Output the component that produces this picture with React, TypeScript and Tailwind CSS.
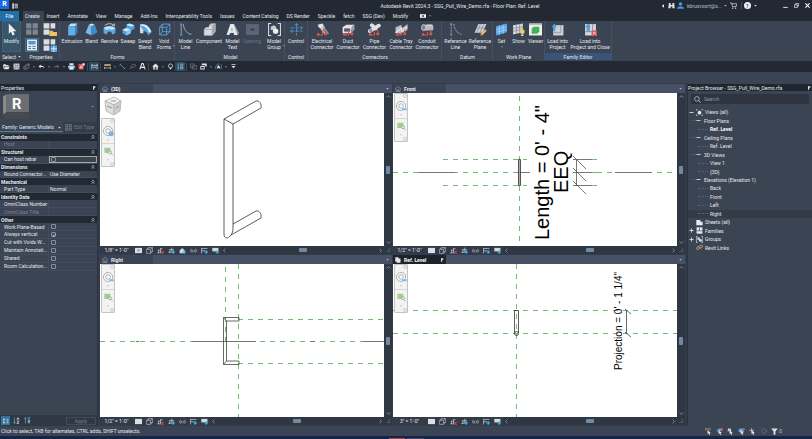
import type { ReactNode } from "react";
import clsx from "clsx";

type IconProps = { className?: string; children: ReactNode };

const Svg = ({ className = "size-[8px]", children }: IconProps) => (
  <svg viewBox="0 0 24 24" fill="none" className={clsx("block shrink-0", className)} aria-hidden="true">
    {children}
  </svg>
);

const Caret = ({ className = "size-[3px]" }: { className?: string }) => (
  <Svg className={className}>
    <path d="M2 7h20L12 19z" fill="currentColor" />
  </Svg>
);

const redNodes = (
  <>
    <path d="M4 22h8v-6M18 12v10" stroke="#d9534f" strokeWidth="2" />
    <circle cx="4" cy="21" r="2.5" fill="#d9534f" />
    <circle cx="18" cy="20" r="3" fill="#d9534f" />
  </>
);

const ribbonIcons: Record<string, ReactNode> = {
  Extrusion: (
    <>
      <path d="M4 6l5-5h12l-4 5z" fill="#bfe0fa" />
      <path d="M4 6h13v17H4z" fill="#62aeea" />
      <path d="M17 6l4-5v17l-4 5z" fill="#3c85c4" />
    </>
  ),
  Blend: (
    <>
      <path d="M7 3l5-2 6 2-6 3z" fill="#c5e3fb" />
      <path d="M7 3l5 3v17L1 18z" fill="#74b9f0" />
      <path d="M12 6l6-3 5 14-11 6z" fill="#3f8bcb" />
    </>
  ),
  Revolve: (
    <>
      <path d="M3 5c5-5 13-5 18 0M21 5V1M21 5h-4" stroke="#d5dbe2" strokeWidth="1.6" />
      <path d="M1 9c6-4 16-4 22 0v9c-2 2-4 3-6 3l-2-5h-6l-2 5c-2 0-4-1-6-3z" fill="#5ba8e6" />
      <path d="M1 9c6-4 16-4 22 0l-6 4c-3-2-7-2-10 0z" fill="#c0e0fa" />
    </>
  ),
  Sweep: (
    <>
      <path d="M8 3l6-2 9 3v7l-5 2-2 6-8 4-7-4v-7l7-3z" fill="#4f9fde" />
      <path d="M8 3l6-2 9 3-6 3zM1 12l7-3 8 3-8 4z" fill="#c9e5fc" />
      <path d="M8 16l8-4v7l-8 4z" fill="#88c5f5" />
    </>
  ),
  "Swept Blend": (
    <>
      <path d="M2 3c10-3 18 4 21 14l-6 6C15 16 10 13 2 16z" fill="#57a5e4" />
      <path d="M2 3c10-3 18 4 21 14h-5C15 8 9 5 2 5z" fill="#d2e9fc" />
      <path d="M2 5v14h6v-5z" fill="#d9dde2" />
    </>
  ),
  "Void Forms": (
    <path d="M3 8h13v14H3zM8 2h14v14H8zM3 8l5-6M16 8l6-6M16 22l6-6M3 22l5-6" stroke="#5ba3dc" strokeWidth="1.6" />
  ),
  "Model Line": (
    <>
      <path d="M4 2v20M8 2c1 10 5 16 14 19" stroke="#aeb6c1" strokeWidth="1.5" />
      <path d="M2 2h4M2 22h4M20 22l3-2" stroke="#5ba3dc" strokeWidth="2" />
    </>
  ),
  Component: (
    <>
      <path d="M2 11l4-3h5V4l4-3h8v15l-6 7H2z" fill="#d8dade" />
      <path d="M11 4h8v8H2v11h15V12l2-8 4-3" stroke="#949aa3" strokeWidth="1.3" />
      <path d="M19 4l4-3v15l-6 7V12z" fill="#a4a9b1" />
    </>
  ),
  "Model Text": (
    <>
      <path d="M9 2h6l9 17-4 4-4-5-9 1z" fill="#9da3ab" />
      <path d="M8 2h6l7 20h-6l-1-4H8l-2 4H1zm3 6l-2 6h4z" fill="#e6e7e9" fillRule="evenodd" />
    </>
  ),
  Opening: (
    <path d="M1 3h22v18H1zm6 6v6h10V9z" fill="#5d6572" fillRule="evenodd" stroke="#707885" />
  ),
  "Model Group": (
    <>
      <path d="M6 1H1v22h5M18 1h5v22h-5" stroke="#d5d9df" strokeWidth="2" />
      <path d="M5 7l6-3 4 3v6H5z" fill="#c6cad0" />
      <circle cx="14" cy="15" r="5" fill="#eceef0" />
    </>
  ),
  Control: (
    <>
      <path d="M12 1v22M1 9h22M1 15h22" stroke="#4c9ad6" strokeWidth="1.6" strokeDasharray="7 2" />
      <path d="M9 4l3-3 3 3M20 6l3 3-3 3M4 12l-3 3 3 3" stroke="#4c9ad6" strokeWidth="1.6" />
    </>
  ),
  "Electrical Connector": (
    <>
      <path d="M3 3l9-2 5 8-5 4-7-5z" fill="#e1e3e6" />
      <path d="M12 7l8 9M9 10l9 11" stroke="#e4a497" strokeWidth="3" />
      <path d="M13 7l10 13" stroke="#5ba8e6" strokeWidth="2.5" />
      {redNodes}
    </>
  ),
  "Duct Connector": (
    <>
      <path d="M1 8l7-5h15l-5 5v11H1z" fill="#e1e3e6" />
      <path d="M4 10h11v6H4z" fill="#525b69" />
      <path d="M18 8l5-5v9l-5 6z" fill="#9ba1aa" />
      {redNodes}
    </>
  ),
  "Pipe Connector": (
    <>
      <path d="M3 15L20 5M7 4l7 6" stroke="#dfe1e4" strokeWidth="7" strokeLinecap="round" />
      <ellipse cx="5" cy="14" rx="3" ry="4" fill="#88909b" />
      {redNodes}
    </>
  ),
  "Cable Tray Connector": (
    <>
      <path d="M1 18V8l11-5v7L23 2v11L11 20z" fill="#b9bec5" />
      <path d="M1 18l11-9v7l11-9" stroke="#e8e9eb" strokeWidth="2" />
      {redNodes}
    </>
  ),
  "Conduit Connector": (
    <>
      <path d="M4 3h16c4 0 4 11 0 11H4z" fill="#b5b9c0" />
      <ellipse cx="5" cy="8.5" rx="4" ry="5.5" fill="#7b828d" stroke="#e0e2e5" strokeWidth="1.5" />
      <path d="M10 4h11" stroke="#e7e8ea" strokeWidth="2" />
      {redNodes}
    </>
  ),
  "Reference Line": (
    <>
      <path d="M4 1v22M9 2c1 10 5 16 14 19" stroke="#aeb6c1" strokeWidth="1.5" strokeDasharray="4 1.5" />
      <path d="M2 2h4M2 22h4" stroke="#6fb073" strokeWidth="2" />
    </>
  ),
  "Reference Plane": (
    <>
      <path d="M8 2h15l-7 16H1z" fill="#c9ccd1" />
      <path d="M12 2L5 18M18 2l-7 16M5 9h15" stroke="#878e98" strokeWidth="1.3" />
      <path d="M22 13l-9 9" stroke="#edc25a" strokeWidth="4" />
      <path d="M14 19l-2 4 4-1z" fill="#e8705e" />
    </>
  ),
  Set: (
    <>
      <path d="M2 6l20-5v16L2 23z" fill="#53a5e8" />
      <path d="M8 5v17M15 3v17M2 12l20-5M2 17l20-5" stroke="#b9dcf8" strokeWidth="1.3" />
    </>
  ),
  Show: (
    <>
      <path d="M2 4l18-3v16L2 21z" fill="#d5d8dc" />
      <path d="M8 3v17M14 2v16M2 10l18-3M2 15l18-3" stroke="#848b96" strokeWidth="1.4" />
      <circle cx="19" cy="16" r="4.5" fill="#f8c95c" />
      <path d="M17 21h4v3h-4z" fill="#e6e6e6" />
    </>
  ),
  Viewer: (
    <>
      <path d="M0 1h24v22H0z" fill="#eef1ee" />
      <path d="M0 1h24v3H0z" fill="#b9c0c8" />
      <path d="M5 10l4-3h10v9l-4 4H5z" fill="#43b05c" />
    </>
  ),
  "Load into Project": (
    <>
      <path d="M4 4h19v19H4z" fill="#cfd1d4" />
      <path d="M18 4v14H4" stroke="#8b929b" strokeWidth="1.5" />
      <path d="M1 8l5-7 5 7H8v7H4V8z" fill="#4aa0e6" />
    </>
  ),
  "Load into Project and Close": (
    <>
      <path d="M2 2h20v21H2z" fill="#d6d8db" />
      <path d="M16 2v20M2 16h20M10 2v14" stroke="#7b838e" strokeWidth="1.5" />
      <path d="M2 8l5-7 5 7H9v7H5V8z" fill="#4aa0e6" />
      <path d="M14 14h10v10H14z" fill="#d95050" />
      <path d="M16.5 16.5l5 5m0-5l-5 5" stroke="#fff" strokeWidth="1.3" />
    </>
  ),
};

type Tool = { lines: string[]; width: string; disabled?: boolean; caret?: boolean };
type Panel = { title: string; className: string; tools: Tool[]; highlight?: boolean };

const panels: Panel[] = [
  {
    title: "Forms",
    className: "w-[115px] pl-[1px]",
    tools: [
      { lines: ["Extrusion"], width: "w-[22px]" },
      { lines: ["Blend"], width: "w-[17px]" },
      { lines: ["Revolve"], width: "w-[19px]" },
      { lines: ["Sweep"], width: "w-[18px]" },
      { lines: ["Swept", "Blend"], width: "w-[16px]" },
      { lines: ["Void", "Forms"], width: "w-[22px]", caret: true },
    ],
  },
  {
    title: "Model",
    className: "w-[110px] pl-[2px]",
    tools: [
      { lines: ["Model", "Line"], width: "w-[17px]" },
      { lines: ["Component"], width: "w-[30px]" },
      { lines: ["Model", "Text"], width: "w-[17px]" },
      { lines: ["Opening"], width: "w-[22px]", disabled: true },
      { lines: ["Model", "Group"], width: "w-[22px]", caret: true },
    ],
  },
  {
    title: "Control",
    className: "w-[23px]",
    tools: [{ lines: ["Control"], width: "w-[22px]" }],
  },
  {
    title: "Connectors",
    className: "w-[134px] pl-[1px]",
    tools: [
      { lines: ["Electrical", "Connector"], width: "w-[26px]" },
      { lines: ["Duct", "Connector"], width: "w-[26px]" },
      { lines: ["Pipe", "Connector"], width: "w-[27px]" },
      { lines: ["Cable Tray", "Connector"], width: "w-[26px]" },
      { lines: ["Conduit", "Connector"], width: "w-[26px]" },
    ],
  },
  {
    title: "Datum",
    className: "w-[51px] pl-[1px]",
    tools: [
      { lines: ["Reference", "Line"], width: "w-[25px]" },
      { lines: ["Reference", "Plane"], width: "w-[24px]" },
    ],
  },
  {
    title: "Work Plane",
    className: "w-[52px]",
    tools: [
      { lines: ["Set"], width: "w-[17px]", caret: true },
      { lines: ["Show"], width: "w-[17px]" },
      { lines: ["Viewer"], width: "w-[17px]" },
    ],
  },
  {
    title: "Family Editor",
    className: "w-[67px]",
    highlight: true,
    tools: [
      { lines: ["Load into", "Project"], width: "w-[25px]" },
      { lines: ["Load into", "Project and Close"], width: "w-[40px]" },
    ],
  },
];

const ribbonTabs = [
  "Create",
  "Insert",
  "Annotate",
  "View",
  "Manage",
  "Add-Ins",
  "Interoperability Tools",
  "Issues",
  "Content Catalog",
  "DS Render",
  "Speckle",
  "fetch",
  "SSG (Dev)",
  "Modify",
];

function TitleBar() {
  return (
    <header className="flex h-[11px] items-center">
      <div className="grid size-[9px] place-items-center self-start bg-[#1668e8] text-[7px] leading-none font-bold text-white">
        R
      </div>
      <div className="flex w-[11px] justify-center">
        <Svg className="size-[6px]">
          <path d="M1 1h7v22H1zM11 3h12v18H11z" fill="#c9ced6" />
          <path d="M13 8h8M13 13h8M13 17h8" stroke="#222933" strokeWidth="2" />
        </Svg>
      </div>
      <h1 className="flex-1 pl-60 text-center">
        Autodesk Revit 2024.3 - SSG_Pull_Wire_Demo.rfa - Floor Plan: Ref. Level
      </h1>
      <div className="flex w-[152px] items-center">
        <Svg className="mx-[1px] size-[4px]">
          <path d="M18 2v20L4 12z" fill="#e4e7eb" />
        </Svg>
        <button aria-label="Search" className="flex w-[10px] justify-center">
          <Svg className="size-[7px]">
            <path d="M3 3h6v7h6V3h6l2 18h-8v-6H9v6H1z" fill="#dfe3e8" />
          </Svg>
        </button>
        <button className="flex items-center gap-[2px] text-[#b8c0cc]">
          <span className="flex w-[9px] justify-center">
            <Svg className="size-[7px]">
              <circle cx="12" cy="7" r="6" fill="#4b9be2" />
              <path d="M1 23v-4l6-4h10l6 4v4z" fill="#4b9be2" />
            </Svg>
          </span>
          <span className="whitespace-nowrap">kbruxvoort@s...</span>
          <Caret />
        </button>
        <button aria-label="App Store" className="flex w-[14px] justify-center">
          <Svg className="size-[7px]">
            <path d="M0 3h5l4 13h12l2-10H6" stroke="#d5dae1" strokeWidth="2.5" />
            <circle cx="9" cy="21" r="2.5" fill="#d5dae1" />
            <circle cx="19" cy="21" r="2.5" fill="#d5dae1" />
          </Svg>
        </button>
        <span className="h-[8px] w-px bg-[#414957]" />
        <button aria-label="Help" className="flex w-[17px] items-center justify-center gap-[3px]">
          <span className="grid size-[7px] place-items-center rounded-full bg-[#eef1f4] font-bold text-[#1d4a7a]">?</span>
          <Caret />
        </button>
        <div className="ml-auto flex">
          <button aria-label="Minimize" className="flex w-[11px] justify-center">
            <Svg className="size-[5px]">
              <path d="M1 21h22" stroke="#fff" strokeWidth="4" />
            </Svg>
          </button>
          <button aria-label="Restore" className="flex w-[11px] justify-center">
            <Svg className="size-[5px]">
              <path d="M2 9h14v13H2zM8 9V2h14v13h-6" stroke="#fff" strokeWidth="3" />
            </Svg>
          </button>
          <button aria-label="Close" className="flex w-[10px] justify-center">
            <Svg className="size-[5px]">
              <path d="M2 2l20 20M22 2L2 22" stroke="#fff" strokeWidth="5" />
            </Svg>
          </button>
        </div>
      </div>
    </header>
  );
}

function RibbonTabs() {
  return (
    <nav className="flex h-[10px] items-stretch whitespace-nowrap">
      <button className="mr-[4px] w-[19px] bg-[#1f6fa8] text-white">File</button>
      {ribbonTabs.map((tab, i) => (
        <button key={tab} className={clsx("px-[4px]", i === 0 ? "mr-[-1px] bg-[#3b4453] pl-[2px]" : "")}>
          {tab}
        </button>
      ))}
      <button aria-label="Ribbon display" className="flex items-center gap-[3px] pl-[8px]">
        <Svg className="h-[4px] w-[6px]">
          <path d="M-6 1h36v22H-6z" fill="#e9ecef" />
          <circle cx="12" cy="12" r="6" fill="#394250" />
        </Svg>
        <Caret className="size-[2px]" />
      </button>
    </nav>
  );
}

function RibbonPanel({ panel }: { panel: Panel }) {
  return (
    <section className={clsx("flex shrink-0 flex-col border-r border-[#465062]", panel.className)}>
      <div className="flex h-[32px]">
        {panel.tools.map((tool) => {
          const name = tool.lines.join(" ");
          return (
            <button
              key={name}
              disabled={tool.disabled}
              className={clsx(
                "flex shrink-0 flex-col items-center pt-[2px] leading-[6px] whitespace-nowrap",
                tool.width,
                tool.disabled ? "text-[#6c7483]" : ""
              )}
            >
              <Svg className="mb-[2px] size-[13px]">{ribbonIcons[name]}</Svg>
              {tool.lines.map((line) => (
                <span key={line}>{line}</span>
              ))}
              {tool.caret && tool.lines.length === 1 && <Caret className="mt-[2px] size-[2px]" />}
              {tool.caret && tool.lines.length > 1 && <Caret className="mt-[-5px] size-[2px] self-end" />}
            </button>
          );
        })}
      </div>
      <div className={clsx("flex h-[7px] items-center justify-center", panel.highlight && "bg-[#39537a]")}>
        {panel.title}
      </div>
    </section>
  );
}

function Ribbon() {
  return (
    <div className="flex h-[40px] overflow-hidden bg-[#3b4453]">
      <section className="flex w-[23px] flex-col items-center">
        <button className="flex h-[31px] w-[19px] flex-col items-center border border-[#3c6178] bg-[#37566a] pt-[1px] leading-[6px]">
          <Svg className="mb-[2px] size-[13px]">
            <path d="M7 1v19l4-4 3 7 4-2-3-6h6z" fill="#eceef1" />
          </Svg>
          Modify
        </button>
        <button className="flex h-[8px] items-center gap-[2px] pt-[1px]">
          Select <Caret />
        </button>
      </section>
      <section className="w-[37px] border-r border-[#465062]">
        <div className="grid h-[32px] grid-cols-2 place-items-center">
          <button aria-label="Family Category">
            <Svg className="size-[14px]">
              <path d="M2 2h9v9H2zM13 2h9v9h-9zM2 13h9v9H2zM13 13h9v9h-9z" fill="#7d8591" />
            </Svg>
          </button>
          <button aria-label="Family Types">
            <Svg className="size-[14px]">
              <path d="M1 2h10v9H1zM13 2h8v9h-8zM1 13h10v9H1z" fill="#dcdee1" />
              <path d="M11 15h5l2 2h6v7H11z" fill="#f0c25a" />
            </Svg>
          </button>
          <button aria-label="Properties" className="border border-[#3d7498] bg-[#38566c]">
            <Svg className="size-[12px]">
              <path d="M2 1h20v22H2z" fill="#e6e8ea" />
              <path d="M5 4h14v7H5z" fill="#4b9be2" />
              <path d="M5 15h5M13 15h6M5 19h5M13 19h6" stroke="#69727f" strokeWidth="2" />
            </Svg>
          </button>
          <button aria-label="Type Properties">
            <Svg className="size-[14px]">
              <path d="M1 2h10v9H1zM13 2h8v9h-8zM1 13h10v9H1z" fill="#dcdee1" />
              <path d="M13 13h11v11H13z" fill="#58a6e8" />
              <path d="M18.5 13v11M13 18.5h11" stroke="#d8ecfc" strokeWidth="1.5" />
            </Svg>
          </button>
        </div>
        <div className="flex h-[7px] items-center justify-center">Properties</div>
      </section>
      {panels.map((panel) => (
        <RibbonPanel key={panel.title} panel={panel} />
      ))}
    </div>
  );
}

const quickIcons: { name: string; icon: ReactNode; boxed?: boolean }[] = [
  { name: "Open", icon: <path d="M1 4h8l2 3h8v3H6L2 20H1zM7 12h16l-4 9H3z" fill="#dfe2e6" /> },
  {
    name: "Save",
    icon: (
      <>
        <path d="M2 2h20v20H2z" fill="#dfe2e6" />
        <path d="M7 2v7h10V2M6 22v-8h12v8" stroke="#3b4350" strokeWidth="2" />
      </>
    ),
  },
  { name: "Sync", icon: <path d="M3 11h8v10H3zM10 9c0-6 8-8 11-2M21 2v6h-6M21 12c0 5-3 7-7 8" stroke="#79818d" strokeWidth="3" /> },
  { name: "caret", icon: null },
  { name: "Undo", icon: <path d="M9 5L2 12l7 6v-4c6-1 9 0 13 4-1-7-6-9-13-9z" fill="#e2e5e9" /> },
  { name: "caret", icon: null },
  { name: "Redo", icon: <path d="M15 5l7 7-7 6v-4c-6-1-9 0-13 4 1-7 6-9 13-9z" fill="#606977" /> },
  { name: "caret", icon: null },
  {
    name: "Print",
    icon: (
      <>
        <path d="M5 1h14v7H5zM1 9h22v9H1z" fill="#dfe2e6" />
        <path d="M5 14h14v9H5z" fill="#fff" stroke="#4a9bdc" strokeWidth="2" />
      </>
    ),
  },
  {
    name: "PDF",
    icon: (
      <>
        <path d="M2 3h17v19H2z" fill="#dd4f4f" />
        <path d="M15 1h8v8h-8z" fill="#e9ecee" />
        <path d="M6 17l5-8 5 8z" stroke="#fff" strokeWidth="2" />
      </>
    ),
  },
  { name: "sep", icon: null },
  { name: "Measure", boxed: true, icon: <path d="M3 3v18M21 3v18M3 8h18M7 15h6M13 12l5 6" stroke="#dbe4ec" strokeWidth="2.5" /> },
  { name: "sep", icon: null },
  {
    name: "Dimension",
    icon: (
      <>
        <path d="M1 4h22v6H1z" fill="#d9a86b" />
        <path d="M1 17h22M2 13v8M22 13v8" stroke="#dfe2e6" strokeWidth="2" />
      </>
    ),
  },
  { name: "caret", icon: null },
  {
    name: "Aligned Dimension",
    icon: (
      <>
        <path d="M4 5l15 14" stroke="#4a9bdc" strokeWidth="3" />
        <path d="M1 8l7-6M16 22l7-6" stroke="#4a9bdc" strokeWidth="2.5" />
      </>
    ),
  },
  { name: "Tag", icon: <path d="M2 21l6-7M8 14c-1-8 8-12 13-9 2 6-3 12-11 10z" stroke="#67717f" strokeWidth="3" /> },
  { name: "Text", icon: <path d="M3 22l7-20h4l7 20M6 15h12" stroke="#e8eaed" strokeWidth="3.5" /> },
  { name: "sep", icon: null },
  {
    name: "3D View",
    icon: (
      <>
        <path d="M1 12L12 2l11 10-3 1v9H4v-9z" fill="#dfe2e6" />
        <path d="M9 14h6v8H9z" fill="#444d5a" />
      </>
    ),
  },
  { name: "caret", icon: null },
  {
    name: "Section",
    icon: (
      <>
        <circle cx="12" cy="10" r="7" stroke="#dfe2e6" strokeWidth="2.5" />
        <path d="M8 16l4 7 4-7z" fill="#dfe2e6" />
      </>
    ),
  },
  { name: "Thin Lines", boxed: true, icon: <path d="M2 4h5M10 4h12M2 10h5M10 10h12M2 15h5M10 15h12M2 20h5M10 20h12" stroke="#a8d3f0" strokeWidth="2.5" /> },
  { name: "sep", icon: null },
  { name: "Close Inactive", icon: <path d="M2 3h12v12H2zM8 9h14v12H8z" stroke="#69727f" strokeWidth="2.5" /> },
  { name: "Switch Windows", icon: <path d="M6 2h17v10h-5V8H6zM1 10h15v12H1zm3 4v5h9v-5z" fill="#dfe2e6" fillRule="evenodd" /> },
  { name: "caret", icon: null },
  {
    name: "Sync Views",
    icon: (
      <>
        <path d="M3 20C0 10 6 3 14 3M20 5c5 7 3 12 0 17" stroke="#4a9bdc" strokeWidth="2.5" />
        <path d="M6 18l5-11 4 4 4 7z" fill="#dfe2e6" />
      </>
    ),
  },
  { name: "caret", icon: null },
  { name: "Customize", icon: <path d="M5 4h14v3H5zM5 10h14l-7 8z" fill="#dfe2e6" /> },
];

function QuickAccess() {
  return (
    <div className="flex h-[11px] items-center bg-[#222933] pl-[1px]">
      {quickIcons.map((item, i) => {
        if (item.name === "caret") {
          return (
            <span key={i} className="flex w-[5px] justify-center">
              <Caret className="size-[2px]" />
            </span>
          );
        }
        if (item.name === "sep") return <span key={i} className="mx-[1px] h-[8px] w-px bg-[#414957]" />;
        return (
          <button
            key={i}
            aria-label={item.name}
            className={clsx("grid h-[9px] w-[10px] place-items-center", item.boxed && "bg-[#2a4a60]")}
          >
            <Svg className="size-[7px]">{item.icon}</Svg>
          </button>
        );
      })}
    </div>
  );
}

type Prop = { name: string; value?: string; check?: boolean; group?: boolean; dim?: boolean; focus?: boolean };

const props: Prop[] = [
  { name: "Constraints", group: true },
  { name: "Host", dim: true },
  { name: "Structural", group: true },
  { name: "Can host rebar", check: false, focus: true },
  { name: "Dimensions", group: true },
  { name: "Round Connector...", value: "Use Diameter" },
  { name: "Mechanical", group: true },
  { name: "Part Type", value: "Normal" },
  { name: "Identity Data", group: true },
  { name: "OmniClass Number" },
  { name: "OmniClass Title", dim: true },
  { name: "Other", group: true },
  { name: "Work Plane-Based", check: false },
  { name: "Always vertical", check: true },
  { name: "Cut with Voids W...", check: false },
  { name: "Maintain Annotati...", check: false },
  { name: "Shared", check: false },
  { name: "Room Calculation...", check: false },
];

const Pin = () => (
  <Svg className="size-[4px]">
    <path d="M6 2h14v9h-7v11H6z" fill="#dfe3e8" />
  </Svg>
);

function PropertiesPalette() {
  return (
    <aside className="flex w-[98px] shrink-0 flex-col border-r border-[#2b323d] bg-[#3b4453] pt-[1px]">
      <h2 className="flex h-[7px] items-center justify-between bg-[#20262f] px-[1px]">
        Properties <Pin />
      </h2>
      <div className="flex h-[31px] items-center justify-between pr-[3px] pl-[2px]">
        <Svg className="size-[27px]">
          <path d="M1 3l3-2v16l-3 2z" fill="#8b8d90" />
          <path d="M4 1h20v16H4z" fill="#6c6f72" />
          <path d="M1 19l3-2h20v6H1z" fill="#46494d" />
          <text x="13" y="14" textAnchor="middle" fontSize="13" fontWeight="700" fill="#fff">
            R
          </text>
        </Svg>
        <Caret className="size-[3px] text-[#8b95a5]" />
      </div>
      <div className="flex h-[10px] items-stretch bg-[#333b48]">
        <div className="relative w-[63px] border-b border-[#5f7c92] bg-[#3b4453]">
          <select aria-label="Type" className="h-full w-full appearance-none pl-[2px] outline-none">
            <option>Family: Generic Models</option>
          </select>
          <Caret className="absolute top-[4px] right-[2px] size-[3px]" />
        </div>
        <button className="flex flex-1 items-center gap-[2px] pl-[2px] whitespace-nowrap text-[#747d8b]">
          <Svg className="size-[7px]">
            <path d="M2 2h8v8H2zM14 2h8v8h-8zM2 14h8v8H2zM14 14h8v8h-8z" stroke="#747d8b" strokeWidth="3" />
          </Svg>
          Edit Type
        </button>
      </div>
      <table className="mt-[2px] h-[137px] w-full table-fixed border-collapse">
        <tbody>
          {props.map((p) =>
            p.group ? (
              <tr key={p.name} className="bg-[#222933]">
                <th colSpan={2} className="p-0 pl-[1px] text-left font-bold">
                  <div className="flex items-center justify-between pr-[2px]">
                    {p.name}
                    <Svg className="size-[4px]">
                      <path d="M3 10l9-8 9 8M3 22l9-8 9 8" stroke="#e4e7eb" strokeWidth="4" />
                    </Svg>
                  </div>
                </th>
              </tr>
            ) : (
              <tr key={p.name} className="border-b border-[#434c5b]">
                <td
                  className={clsx(
                    "w-[49px] border-r border-[#434c5b] p-0 pl-[4px] whitespace-nowrap",
                    p.dim && "text-[#7b8493]"
                  )}
                >
                  {p.name}
                </td>
                <td className={clsx("p-0 pl-[1px]", p.focus && "outline outline-offset-[-1px] outline-[#a9a7a5]")}>
                  {p.check === undefined ? (
                    p.value
                  ) : (
                    <input
                      type="checkbox"
                      aria-label={p.name}
                      defaultChecked={p.check}
                      className="ml-[1px] grid size-[5px] appearance-none place-items-center rounded-[1px] border border-[#8791a0] leading-none after:hidden after:content-['✓'] checked:after:block"
                    />
                  )}
                </td>
              </tr>
            )
          )}
        </tbody>
      </table>
      <div className="mt-auto flex h-[11px] items-center gap-[2px] bg-[#303844] pr-[1px] pl-[1px]">
        <button aria-label="Categorized" className="grid size-[9px] place-items-center bg-[#2f7399]">
          <Svg className="size-[6px]">
            <path d="M3 2v20M3 5h6M3 19h6M14 5h8M14 12h8M14 19h8" stroke="#e8f1f8" strokeWidth="3" />
          </Svg>
        </button>
        <button aria-label="Sort ascending" className="grid size-[9px] place-items-center">
          <Svg className="size-[7px]">
            <path d="M5 2v20M1 17l4 5 4-5" stroke="#5aa5dc" strokeWidth="2.5" />
            <path d="M13 10l4-8 4 8M13 14h8l-8 8h8" stroke="#dfe3e8" strokeWidth="2.5" />
          </Svg>
        </button>
        <button aria-label="Sort descending" className="grid size-[9px] place-items-center">
          <Svg className="size-[7px]">
            <path d="M5 22V2M1 7l4-5 4 5M13 2h8l-8 8h8" stroke="#5aa5dc" strokeWidth="2.5" />
            <path d="M13 14h8M17 14v8" stroke="#dfe3e8" strokeWidth="3" />
          </Svg>
        </button>
        <button disabled className="ml-auto h-[8px] w-[30px] border border-[#434c5b] text-[#757e8c]">
          Apply
        </button>
      </div>
    </aside>
  );
}

const star = <path d="M18 11v12M12 17h12" stroke="#35c3e8" strokeWidth="4" />;

const viewIcons: Record<string, ReactNode> = {
  detail: <path d="M0 3h24v18H0z" fill="#dcdfe3" />,
  detailFine: (
    <>
      <path d="M0 3h24v18H0z" fill="#dcdfe3" />
      <circle cx="12" cy="12" r="5" fill="#a8aeb6" />
    </>
  ),
  style: <path d="M2 8h13v14H2zM8 8V2h14v14h-7M2 8l6-6M15 8l7-6M15 22l7-6" stroke="#c5cad2" strokeWidth="2" />,
  sunOff: (
    <>
      <path d="M1 20h12M5 20V9M5 11h7M12 4v16M12 6h7" stroke="#c5cad2" strokeWidth="2.5" />
      <path d="M14 14l9 9M23 14l-9 9" stroke="#e04c4c" strokeWidth="3.5" />
    </>
  ),
  crop: (
    <>
      <path d="M1 18h12M6 20V7M6 9h14M13 2v16" stroke="#c5cad2" strokeWidth="2.5" />
      {star}
    </>
  ),
  lock: (
    <>
      <path d="M2 12l9-9 9 9v9H2z" fill="#d5d9de" />
      {star}
    </>
  ),
  hide: (
    <>
      <circle cx="6" cy="14" r="4" stroke="#a3abb7" strokeWidth="2.5" />
      <circle cx="18" cy="14" r="4" stroke="#a3abb7" strokeWidth="2.5" />
      <path d="M2 12l2-6M22 12l-2-6" stroke="#a3abb7" strokeWidth="2" />
    </>
  ),
  reveal: (
    <>
      <path d="M2 22V3M2 5h20M2 13h12" stroke="#c5cad2" strokeWidth="2.5" />
      {star}
    </>
  ),
  constraints: (
    <>
      <path d="M1 3h21v12H1z" fill="#d5d9de" />
      {star}
    </>
  ),
};

const Chevron = ({ d }: { d: string }) => (
  <Svg className="size-[5px]">
    <path d={d} stroke="#aab3c0" strokeWidth="3" />
  </Svg>
);

function NavBar({ cube }: { cube?: boolean }) {
  return (
    <div
      className={clsx(
        "absolute left-px flex h-[49px] w-[14px] flex-col items-center rounded-[1px] border border-[#c4c4c4] bg-[#f3f3f3] text-[#8c8c8c]",
        cube ? "top-[25px]" : "top-0"
      )}
    >
      <Svg className="size-[4px] self-end">
        <circle cx="12" cy="12" r="9" stroke="#aaa" strokeWidth="3" />
      </Svg>
      <button aria-label="Steering wheel" className="mt-[3px]">
        <Svg className="size-[11px]">
          <circle cx="11" cy="11" r="10" fill="#fbfbfb" stroke="#a6a6a6" strokeWidth="2" />
          <circle cx="11" cy="11" r="5" stroke="#a6a6a6" strokeWidth="2" />
          {cube ? <circle cx="18" cy="17" r="5.5" fill="#7fb2dd" /> : <path d="M12 15h12v6H12z" fill="#8db9de" stroke="#fff" />}
        </Svg>
      </button>
      <Caret className="mt-[2px] size-[2px]" />
      <span className="my-[2px] h-px w-full bg-[#d6d6d6]" />
      <button aria-label="Zoom">
        <Svg className="mt-[1px] size-[9px]">
          <path d="M1 2h16v14H1z" fill="#a3cc95" />
          <circle cx="16" cy="14" r="4" fill="#eef3ee" stroke="#949b94" strokeWidth="2" />
          <path d="M19 17l4 5" stroke="#949b94" strokeWidth="2" />
        </Svg>
      </button>
      <Caret className="mt-[3px] size-[2px]" />
      <Svg className="mt-auto size-[4px] self-end">
        <circle cx="12" cy="12" r="9" stroke="#aaa" strokeWidth="3" />
      </Svg>
    </div>
  );
}

const Plane = ({ d }: { d: string }) => <path d={d} stroke="#6fbd72" strokeDasharray="5 5" fill="none" />;

const Drawing3D = () => (
  <>
    <g stroke="#333" strokeWidth="0.8" fill="none">
      <path d="M124 26L156 8c3-1 6 3 5 7L133 31zM124 26v115c0 5 4 5 7 1 1-1 2-4 2-6V31" />
      <path d="M133 131l23-13c3-1 6 3 5 7l-30 17" />
    </g>
    <g stroke="#b0b0b0" strokeWidth="0.8" strokeLinejoin="round">
      <path d="M5 8l9-4 7 4-7 4z" fill="#f2f2f2" />
      <path d="M5 8l9 4v10l-8-4z" fill="#dedede" />
      <path d="M14 12l7-4-1 10-6 4z" fill="#cfcfcf" />
      <path d="M7 13l5 2M16 15l3-2M11 8h5" stroke="#7c7c7c" />
    </g>
  </>
);

const DrawingFront = () => (
  <>
    <Plane d="M126.5 3v150" />
    <Plane d="M0 79.5h138M204 79.5h80M50 66.5h84M50 92.5h84M199 66.5h5M199 79.5h5M199 92.5h5" />
    <path d="M25 79.5h37M124 79.5h13M222 79.5h37" stroke="#777" />
    <path d="M125.5 66.5h2v26h-2z" fill="#aaa" stroke="#333" strokeWidth="0.8" />
    <path
      d="M180 66.5h19M180 79.5h19M180 92.5h19M183.5 66v27M180 63l13 13M180 75l13 13M180 88l13 13"
      stroke="#555"
      strokeWidth="0.8"
    />
    <g fontFamily="Liberation Sans, Arial, sans-serif" fontSize="20" fill="#000">
      <text transform="translate(156 147) rotate(-90)">Length = 0' - 4"</text>
      <text transform="translate(175 100) rotate(-90)">EEQ</text>
    </g>
  </>
);

const DrawingRight = () => (
  <>
    <Plane d="M125.5 3v74" />
    <Plane d="M138.5 0v153" />
    <Plane d="M0 77.5h284M138 55.5h146M138 99.5h146" />
    <path d="M36 77.5h3M92 77.5h64M210 77.5h5M263 77.5h21" stroke="#777" />
    <path
      d="M139 53.5h-15.500v47H139v-3.500h-12.500V57H139zM123.500 53.500l3 3.500M123.500 100.500l3-3.500"
      stroke="#444"
      strokeWidth="0.8"
    />
  </>
);

const DrawingLevel = () => (
  <>
    <Plane d="M123.5 0v153" />
    <Plane d="M0 46.5h284M0 69.5h284" />
    <path d="M121.5 69V46.5h4V69" stroke="#333" strokeWidth="0.8" />
    <circle cx="123.5" cy="69.5" r="2" stroke="#333" strokeWidth="0.8" />
    <path d="M233.5 46v24M232 45l6 5M232 68l6 5" stroke="#444" strokeWidth="0.8" />
    <text transform="translate(229 106) rotate(-90)" fontFamily="Liberation Sans, Arial, sans-serif" fontSize="10" fill="#000">
      Projection = 0' - 1 1/4"
    </text>
  </>
);

type View = { title: string; scale: string; icons: string[]; drawing: ReactNode; active?: boolean; cube?: boolean };

const planIcons = ["detail", "style", "sunOff", "crop", "hide", "reveal", "constraints"];

const views: View[] = [
  {
    title: "{3D}",
    scale: `1/8" = 1'-0"`,
    icons: ["detailFine", "style", "sunOff", "crop", "lock", "hide", "reveal", "constraints"],
    drawing: <Drawing3D />,
    cube: true,
  },
  { title: "Front", scale: `1/2" = 1'-0"`, icons: planIcons, drawing: <DrawingFront /> },
  { title: "Right", scale: `1/2" = 1'-0"`, icons: planIcons, drawing: <DrawingRight /> },
  { title: "Ref. Level", scale: `3" = 1'-0"`, icons: planIcons, drawing: <DrawingLevel />, active: true },
];

function ViewPane({ view }: { view: View }) {
  return (
    <section className="flex min-h-0 min-w-0 flex-col">
      <div className="flex h-[9px] shrink-0 items-stretch justify-between bg-[#475064] pr-[3px]">
        <h2
          className={clsx(
            "flex w-[53px] items-center gap-[3px] px-[2px] font-bold",
            view.active ? "bg-[#1d222b] text-white" : "bg-[#3b4454]"
          )}
        >
          <Svg className="size-[6px]">
            {view.active ? (
              <path d="M1 1h13v5h8v17H6v-5H1z" fill="#e3e6ea" />
            ) : (
              <path d="M1 11L12 2l11 9M4 10v12h16V10M9 22v-7h6v7" stroke="#a8b0bc" strokeWidth="2" />
            )}
          </Svg>
          <span className="flex-1">{view.title}</span>
          {view.active && <Pin />}
        </h2>
        <Caret className="size-[3px] self-center text-[#b4bcc8]" />
      </div>
      <div className="flex min-h-0 flex-1">
        <div className="relative min-w-0 flex-1 overflow-hidden bg-white">
          <svg viewBox="0 0 284 153" preserveAspectRatio="xMidYMid slice" fill="none" className="block h-full w-full">
            {view.drawing}
          </svg>
          <NavBar cube={view.cube} />
        </div>
        <div className="flex w-[8px] flex-col items-center justify-between bg-[#2f3743] py-[1px]">
          <Chevron d="M3 17l9-9 9 9" />
          <span className="h-[8px] w-[4px] rounded-[1px] bg-[#7189a5]" />
          <Chevron d="M3 7l9 9 9-9" />
        </div>
      </div>
      <div className="flex h-[8px] shrink-0 items-center bg-[#2f3743]">
        <div className="flex h-full items-center bg-[#333b48]">
          <button className="w-[33px] text-center whitespace-nowrap">{view.scale}</button>
          {view.icons.map((name) => (
            <button key={name} aria-label={name} className="flex w-[11px] justify-center">
              <Svg className="size-[7px]">{viewIcons[name]}</Svg>
            </button>
          ))}
        </div>
        <div className="flex flex-1 items-center justify-between px-[1px]">
          <Chevron d="M16 3l-9 9 9 9" />
          <span className="h-[4px] w-[8px] rounded-[1px] bg-[#7189a5]" />
          <Chevron d="M8 3l9 9-9 9" />
        </div>
        <Svg className="mx-[1px] size-[6px]">
          <path d="M18 6h3M18 12h3M12 12h3M18 18h3M12 18h3M6 18h3" stroke="#7b8593" strokeWidth="3" />
        </Svg>
      </div>
    </section>
  );
}

type Node = { name: string; level: number; sign?: string; bold?: boolean; selected?: boolean; icon?: ReactNode };

const tree: Node[] = [
  {
    name: "Views (all)",
    level: 0,
    sign: "−",
    icon: (
      <>
        <path d="M1 6V1h5M18 1h5v5M1 18v5h5M23 18v5h-5" stroke="#c5cad2" strokeWidth="2.5" />
        <path d="M6 9l6-4 6 4v7l-6 4-6-4z" fill="#e6e8eb" />
      </>
    ),
  },
  { name: "Floor Plans", level: 1, sign: "−" },
  { name: "Ref. Level", level: 2, bold: true },
  { name: "Ceiling Plans", level: 1, sign: "−" },
  { name: "Ref. Level", level: 2 },
  { name: "3D Views", level: 1, sign: "−" },
  { name: "View 1", level: 2 },
  { name: "{3D}", level: 2 },
  { name: "Elevations (Elevation 1)", level: 1, sign: "−" },
  { name: "Back", level: 2 },
  { name: "Front", level: 2 },
  { name: "Left", level: 2 },
  { name: "Right", level: 2, selected: true },
  { name: "Sheets (all)", level: 0, icon: <path d="M1 3h14v6h8v12H1z" fill="#e6e8eb" /> },
  {
    name: "Families",
    level: 0,
    sign: "+",
    icon: (
      <>
        <path d="M2 1h20v22H2z" fill="#e6e8eb" />
        <path d="M12 1v12M2 13h20" stroke="#4a5362" strokeWidth="2.5" />
      </>
    ),
  },
  {
    name: "Groups",
    level: 0,
    sign: "+",
    icon: (
      <>
        <path d="M6 1H1v22h5M18 1h5v22h-5" stroke="#dfe2e6" strokeWidth="2.5" />
        <path d="M5 5h8v8H5z" fill="#dfe2e6" />
        <circle cx="15" cy="15" r="5" fill="#dfe2e6" />
      </>
    ),
  },
  {
    name: "Revit Links",
    level: 0,
    icon: (
      <>
        <rect x="1" y="10" width="12" height="8" rx="4" transform="rotate(-25 7 14)" stroke="#c39a78" strokeWidth="3" />
        <rect x="11" y="5" width="12" height="8" rx="4" transform="rotate(-25 17 9)" stroke="#c39a78" strokeWidth="3" />
      </>
    ),
  },
];

const Sign = ({ sign }: { sign?: string }) => (
  <Svg className="size-[5px]">
    {sign && <path d={sign === "+" ? "M2 12h20M12 2v20" : "M2 12h20"} stroke="#dfe3e8" strokeWidth="4" />}
  </Svg>
);

function ProjectBrowser() {
  return (
    <aside className="flex w-[125px] shrink-0 flex-col border-l border-[#2b323d] bg-[#3b4453] pt-[1px]">
      <h2 className="flex h-[7px] items-center justify-between bg-[#20262f] pr-[1px] whitespace-nowrap">
        Project Browser - SSG_Pull_Wire_Demo.rfa <Pin />
      </h2>
      <label className="mx-[3px] mt-[3px] flex h-[10px] items-center gap-[3px] bg-[#2e3541] px-[3px]">
        <Svg className="size-[7px]">
          <circle cx="10" cy="10" r="8" stroke="#c5cad2" strokeWidth="2.5" />
          <path d="M16 16l7 7" stroke="#c5cad2" strokeWidth="3" />
        </Svg>
        <input
          type="search"
          aria-label="Search"
          placeholder="Search"
          className="w-full min-w-0 bg-transparent outline-none placeholder:text-[#8c95a3]"
        />
      </label>
      <ul className="mt-[4px] grid h-[144px] auto-rows-fr">
        {tree.map((node, i) => (
          <li
            key={i}
            className={clsx("flex items-center pl-[1px]", node.selected && "bg-[#333b47]", node.bold && "font-bold text-white")}
          >
            {node.level === 0 && (
              <>
                <Sign sign={node.sign} />
                <Svg className="mr-[2px] ml-[2px] size-[7px]">{node.icon}</Svg>
              </>
            )}
            {node.level === 1 && (
              <>
                <span className="ml-[2px] w-[5px] border-t border-dotted border-[#5c6574]" />
                <Sign sign={node.sign} />
                <span className="w-[3px]" />
              </>
            )}
            {node.level === 2 && <span className="mr-[2px] ml-[9px] w-[10px] border-t border-dotted border-[#5c6574]" />}
            {node.name}
          </li>
        ))}
      </ul>
    </aside>
  );
}

const cursor = <path d="M9 8v13l3-3 3 6 3-2-3-5h5z" fill="#e9ecef" />;

const selectIcons: { name: string; icon: ReactNode }[] = [
  { name: "Select links", icon: <path d="M1 2h17v5H1z" stroke="#c39a78" strokeWidth="2" /> },
  { name: "Select underlay", icon: <path d="M1 12L9 2h13v7z" fill="#5ba8e6" /> },
  { name: "Select pinned", icon: <path d="M3 2h10v6l3 3H1l2-3z" fill="#c9ced5" /> },
  { name: "Select by face", icon: <path d="M2 5l4-3h14v12H2z" fill="#5ba8e6" /> },
  { name: "Drag on selection", icon: <path d="M9 0v16M1 8h16" stroke="#c9ced5" strokeWidth="2.5" /> },
];

function StatusBar() {
  return (
    <footer>
      <div className="flex h-[10px] items-center justify-between bg-[#3b4453] pr-[30px] pl-[1px]">
        <p>Click to select, TAB for alternates, CTRL adds, SHIFT unselects.</p>
        <div className="flex items-center">
          {selectIcons.map(({ name, icon }, i) => (
            <button key={name} aria-label={name} className="flex w-[11px] justify-center">
              <Svg className="size-[7px]">
                {icon}
                {cursor}
                {i % 2 === 1 && <circle cx="20" cy="4" r="4" fill="#e04c4c" />}
              </Svg>
            </button>
          ))}
          <button aria-label="Background processes" className="flex w-[12px] justify-center">
            <Svg className="size-[6px]">
              <circle cx="12" cy="12" r="9" stroke="#8992a0" strokeWidth="3" strokeDasharray="4 2" />
            </Svg>
          </button>
          <button aria-label="Filter" className="flex items-center pl-[1px] text-[#b4bcc8]">
            <Svg className="size-[7px]">
              <path d="M1 2h22l-8 10v11H9V12z" fill="#dfe2e6" />
            </Svg>
            :0
          </button>
        </div>
      </div>
      <div className="flex h-[3px] items-end justify-center gap-[2px] bg-[#14244a]">
        <span className="h-px w-[16px] bg-[#9b4a52]" />
        <span className="h-px w-[17px] bg-[#3d4860]" />
      </div>
    </footer>
  );
}

export default function App() {
  return (
    <div className="flex h-screen flex-col overflow-hidden bg-[#222933] font-['Roboto','Open_Sans',sans-serif] text-[5px] leading-[6px] text-[#e6e9ed]">
      <TitleBar />
      <RibbonTabs />
      <Ribbon />
      <QuickAccess />
      <div className="h-[11px] shrink-0 bg-[#3b4453]" />
      <main className="flex min-h-0 flex-1">
        <PropertiesPalette />
        <div className="grid min-w-0 flex-1 grid-cols-2 grid-rows-2 gap-px bg-[#333c4b] px-[2px] py-px">
          {views.map((view) => (
            <ViewPane key={view.title} view={view} />
          ))}
        </div>
        <ProjectBrowser />
      </main>
      <StatusBar />
    </div>
  );
}
